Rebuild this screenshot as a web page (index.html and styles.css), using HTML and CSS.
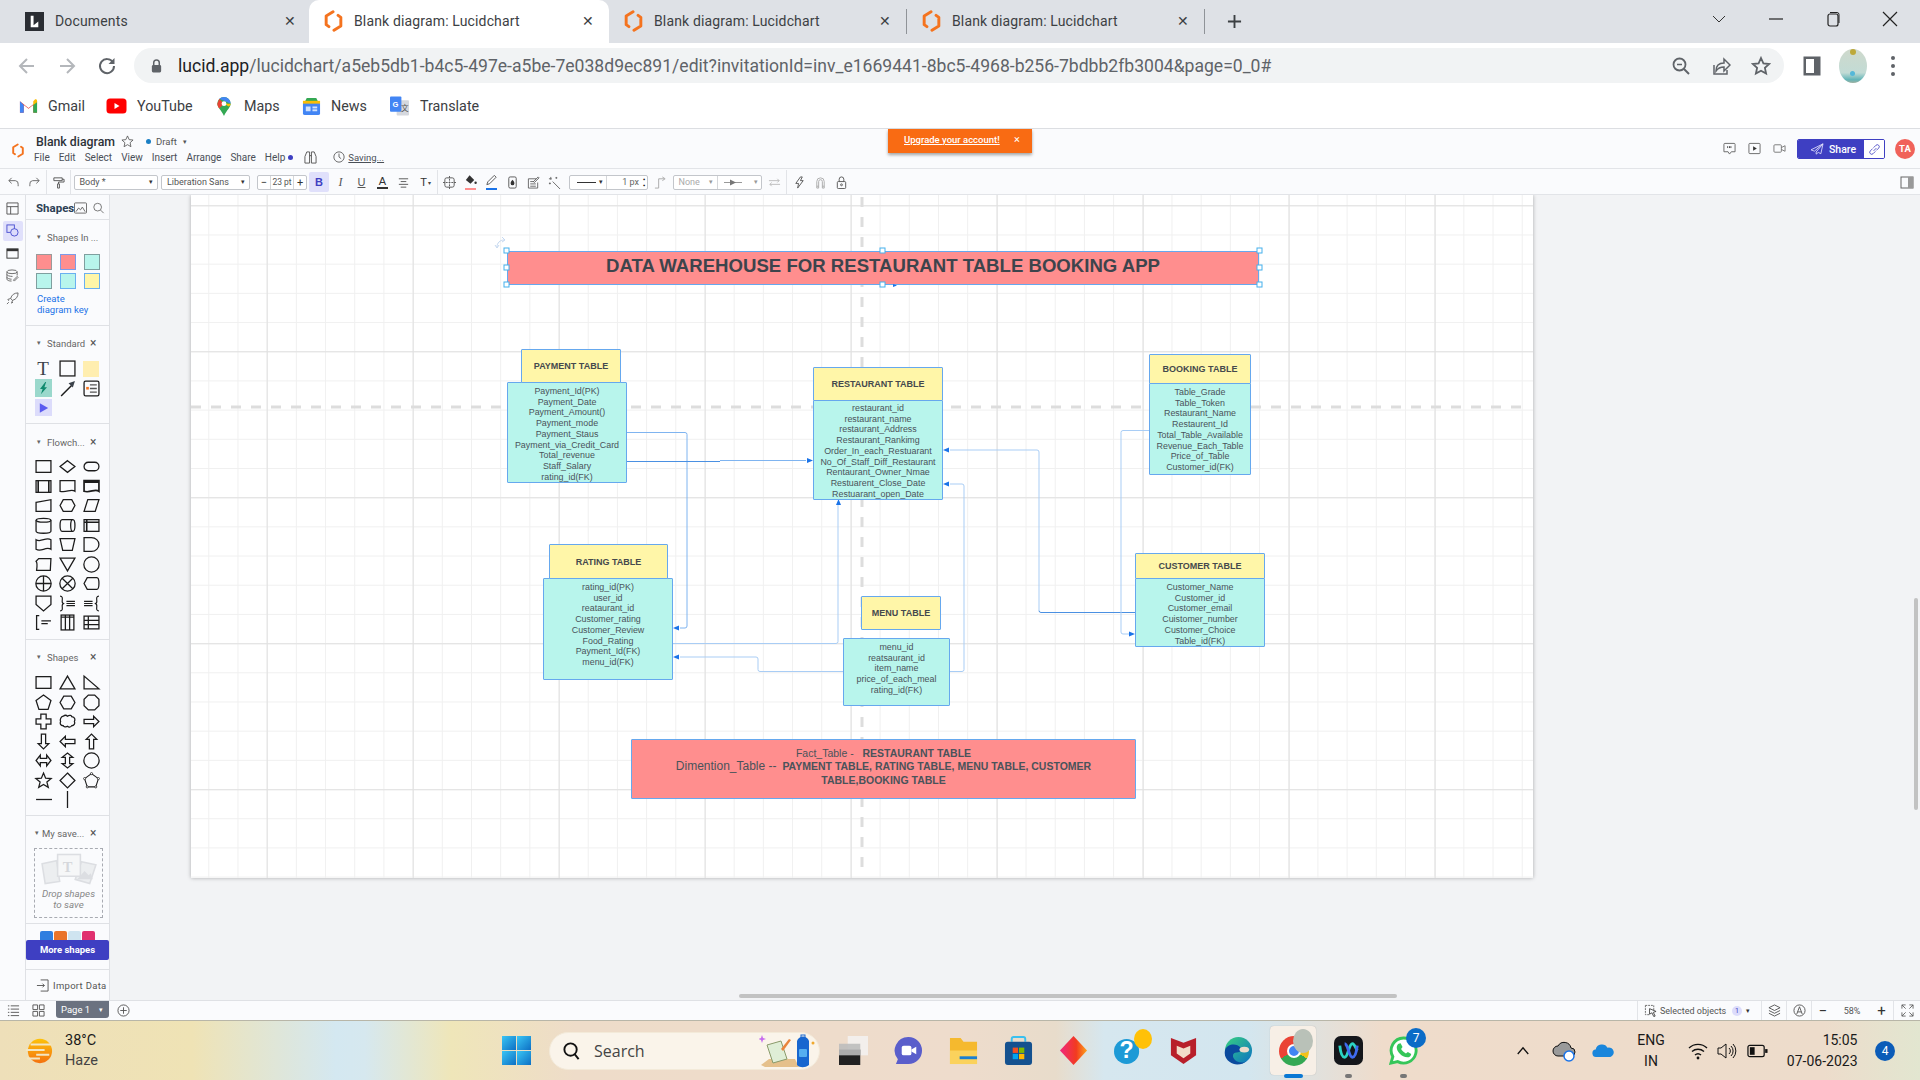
FILE: index.html
```html
<!DOCTYPE html>
<html lang="en">
<head>
<meta charset="utf-8">
<title>Blank diagram: Lucidchart</title>
<link rel="stylesheet" href="styles.css">
</head>
<body>
<svg class="defs" width="0" height="0"><defs>
<symbol id="lucid" viewBox="0 0 20 24"><path d="M9.5 2 2 6.5V16l3 2.2M10.5 22l7.500-4.500V8L15 5.800" fill="none" stroke="#f4731f" stroke-width="3.2" stroke-linecap="round" stroke-linejoin="round"/></symbol>
</defs></svg>

<div class="tabstrip">
  <div class="tab tab-docs">
    <svg class="tab-ico" viewBox="0 0 20 20"><rect width="20" height="20" fill="#2a2d33"/><path d="M6 4h3v10l5-4v6H6z" fill="#fff"/></svg>
    <span class="tab-title">Documents</span><span class="tab-x">✕</span>
  </div>
  <div class="tab tab-active">
    <svg class="tab-ico"><use href="#lucid"/></svg>
    <span class="tab-title">Blank diagram: Lucidchart</span><span class="tab-x">✕</span>
  </div>
  <div class="tab tab-sep">
    <svg class="tab-ico"><use href="#lucid"/></svg>
    <span class="tab-title">Blank diagram: Lucidchart</span><span class="tab-x">✕</span>
  </div>
  <div class="tab tab-sep">
    <svg class="tab-ico"><use href="#lucid"/></svg>
    <span class="tab-title">Blank diagram: Lucidchart</span><span class="tab-x">✕</span>
  </div>
  <svg class="new-tab" viewBox="0 0 16 16"><path d="M8 1v14M1 8h14" stroke="#3c4043" stroke-width="2"/></svg>
  <div class="win-ctrls">
    <svg class="win-ico" viewBox="0 0 16 16"><path d="M2 5l6 6 6-6" fill="none" stroke="#333" stroke-width="1"/></svg>
    <svg class="win-ico" viewBox="0 0 16 16"><path d="M1 8h14" stroke="#222" stroke-width="1.200"/></svg>
    <svg class="win-ico" viewBox="0 0 16 16"><rect x="3" y="3" width="10" height="12" rx="2" fill="none" stroke="#222" stroke-width="1.200"/><path d="M5 1.500h7a2 2 0 0 1 2 2V12" fill="none" stroke="#222"/></svg>
    <svg class="win-ico" viewBox="0 0 16 16"><path d="M1 1l14 14M15 1 1 15" stroke="#222" stroke-width="1.200"/></svg>
  </div>
</div>

<div class="navbar">
  <svg class="nav-ico" viewBox="0 0 20 20"><path d="M17 10H4M10 3l-7 7 7 7" fill="none" stroke="#b4b7bb" stroke-width="2"/></svg>
  <svg class="nav-ico" viewBox="0 0 20 20"><path d="M3 10h13M10 3l7 7-7 7" fill="none" stroke="#b4b7bb" stroke-width="2"/></svg>
  <svg class="nav-ico" viewBox="0 0 20 20"><path d="M16 6.500A7 7 0 1 0 17 10" fill="none" stroke="#5f6368" stroke-width="2"/><path d="M17.500 2v6h-6z" fill="#5f6368"/></svg>
  <div class="omnibox">
    <svg class="lock" viewBox="0 0 14 16"><path d="M4 7V4.500a3 3 0 0 1 6 0V7" fill="none" stroke="#5f6368" stroke-width="1.600"/><rect x="2" y="7" width="10" height="8" rx="1.500" fill="#5f6368"/></svg>
    <span class="url"><b class="url-host">lucid.app</b>/lucidchart/a5eb5db1-b4c5-497e-a5be-7e038d9ec891/edit?invitationId=inv_e1669441-8bc5-4968-b256-7bdbb2fb3004&amp;page=0_0#</span>
    <svg class="omni-ico" viewBox="0 0 20 20"><circle cx="8.500" cy="8.500" r="6" fill="none" stroke="#5f6368" stroke-width="1.800"/><path d="M13 13l5 5" stroke="#5f6368" stroke-width="2"/><path d="M6 8.500h5" stroke="#5f6368" stroke-width="1.500"/></svg>
    <svg class="omni-ico" viewBox="0 0 20 20"><path d="M3 9v9h13v-4" fill="none" stroke="#5f6368" stroke-width="1.500"/><path d="M5 15c0-6 4-8 8-8V3l6 6-6 6v-4c-4 0-6 1-8 4z" fill="none" stroke="#5f6368" stroke-width="1.500"/></svg>
    <svg class="omni-ico" viewBox="0 0 20 20"><path d="M10 2l2.400 5.400 5.800.600-4.300 3.900 1.200 5.700L10 14.700l-5.100 2.900 1.200-5.700L1.800 8l5.800-.600z" fill="none" stroke="#5f6368" stroke-width="1.800"/></svg>
  </div>
  <svg class="side-ico" viewBox="0 0 18 20"><rect x=".5" y=".5" width="17" height="19" fill="#5f6368"/><rect x="3" y="3" width="8" height="14" fill="#fff"/></svg>
  <div class="avatar"><span class="avatar-top"></span><span class="avatar-dot"></span></div>
  <div class="kebab"><i></i><i></i><i></i></div>
</div>

<div class="bookmarks">
  <div class="bm bm-gmail"><svg class="bm-ico" viewBox="0 0 20 16"><path d="M1 15V3l9 7 9-7v12h-4V7l-5 4-5-4v8z" fill="#ea4335"/><path d="M1 15h4V7L1 3z" fill="#4285f4"/><path d="M15 15h4V3l-4 4z" fill="#34a853"/><path d="M15 3v4l4-3V2.500c0-1.500-1.500-2-2.500-1.200z" fill="#fbbc04"/></svg><span>Gmail</span></div>
  <div class="bm bm-yt"><svg class="bm-ico" viewBox="0 0 20 16"><rect width="20" height="15" y=".5" rx="3.500" fill="#ff0000"/><path d="M8 5l5 3-5 3z" fill="#fff"/></svg><span>YouTube</span></div>
  <div class="bm bm-maps"><svg class="bm-ico" viewBox="0 0 16 22"><path d="M8 1a7 7 0 0 1 7 7c0 4-4 6-7 13C5 14 1 12 1 8a7 7 0 0 1 7-7z" fill="#34a853"/><path d="M8 1a7 7 0 0 1 7 7L3 3a7 7 0 0 1 5-2z" fill="#4285f4"/><path d="M3 3 1 8c0 2 1 3.500 2 5L8 8z" fill="#ea4335"/><path d="M15 8l-7 0 5 3c1-1 2-2 2-3z" fill="#fbbc04"/><circle cx="8" cy="8" r="2.500" fill="#fff"/></svg><span>Maps</span></div>
  <div class="bm bm-news"><svg class="bm-ico" viewBox="0 0 20 20"><path d="M3 5 5 1h10l2 4z" fill="#34a853"/><rect x="1" y="5" width="18" height="14" rx="2" fill="#4285f4"/><rect x="1" y="4" width="18" height="3" fill="#fbbc04"/><rect x="4" y="10" width="5" height="5" fill="#cfe1fd"/><rect x="11" y="10" width="5" height="2" fill="#cfe1fd"/><rect x="11" y="13" width="5" height="2" fill="#cfe1fd"/></svg><span>News</span></div>
  <div class="bm bm-tr"><svg class="bm-ico" viewBox="0 0 20 20"><rect x="7" y="4" width="13" height="16" rx="1" fill="#d5d8de"/><rect width="12" height="16" rx="1" fill="#4285f4"/><text class="bm-g" x="2.500" y="11">G</text><text class="bm-z" x="11.500" y="15">文</text></svg><span>Translate</span></div>
</div>

<div class="lucid-head">
  <svg class="lh-logo"><use href="#lucid"/></svg>
  <div class="lh-doc">
    <div class="lh-title-row">
      <span class="lh-title">Blank diagram</span>
      <svg class="lh-star" viewBox="0 0 14 14"><path d="M7 1l1.800 4 4.200.4-3.200 2.900.9 4.300L7 10.400l-3.700 2.200.9-4.300L1 5.400 5.200 5z" fill="none" stroke="#555" stroke-width=".9"/></svg>
      <span class="lh-dot"></span><span class="lh-draft">Draft</span><span class="lh-caret">▾</span>
    </div>
    <div class="lh-menu">
      <span>File</span><span>Edit</span><span>Select</span><span>View</span><span>Insert</span><span>Arrange</span><span>Share</span><span class="menu-help">Help</span><i class="menu-dot"></i>
      <svg class="menu-bino" viewBox="0 0 14 14"><path d="M3 1h3v12H1V6zM8 1h3l2 5v7H8zM6 5h2" fill="none" stroke="#555" stroke-width="1"/></svg>
      <svg class="menu-clock" viewBox="0 0 14 14"><circle cx="7" cy="7" r="6" fill="none" stroke="#555"/><path d="M7 3v4l2.500 2" fill="none" stroke="#555"/></svg>
      <span class="menu-saving">Saving...</span>
    </div>
  </div>
  <div class="upgrade"><span class="upgrade-link">Upgrade your account!</span><span class="upgrade-x">×</span></div>
  <div class="lh-right">
    <svg class="lh-ico" viewBox="0 0 14 14"><path d="M2 1.500h10a1 1 0 0 1 1 1v8h-4L7 13l-1.500-2.500H1v-8a1 1 0 0 1 1-1z" fill="none" stroke="#666"/><path d="M5 4.500v2M7 4.500v2M8.500 4.500v2" stroke="#444"/></svg>
    <svg class="lh-ico" viewBox="0 0 14 14"><rect x="1" y="1.500" width="12" height="11" rx="1" fill="none" stroke="#666"/><path d="M5.500 4.500l4 2.500-4 2.500z" fill="#333"/></svg>
    <svg class="lh-ico" viewBox="0 0 14 14"><rect x="1" y="3" width="8" height="8" rx="1" fill="none" stroke="#777"/><path d="M9 6l4-2v6L9 8" fill="none" stroke="#777"/></svg>
    <div class="share-btn">
      <div class="share-main"><svg class="share-plane" viewBox="0 0 16 14"><path d="M15 1 1 8l4 1.500L15 1 7 10.500V13l2.500-2 3 1.500z" fill="none" stroke="#dfe0fb" stroke-width="1"/></svg><span>Share</span></div>
      <div class="share-link"><svg class="share-chain" viewBox="0 0 14 14"><path d="M6 8.500 9 5.500M5 6 2.500 8.500a2.100 2.100 0 0 0 3 3L8 9M6 5l2.500-2.500a2.100 2.100 0 0 1 3 3L9 8" fill="none" stroke="#3e3fc2" stroke-width=".9"/></svg></div>
    </div>
    <div class="user-badge">TA</div>
  </div>
</div>

<div class="lucid-tools">
  <div class="slot"><svg class="tb" viewBox="0 0 14 14"><path d="M2 5h7a3.500 3.500 0 0 1 3 4v2M5 2 2 5l3 3" fill="none" stroke="#666"/></svg></div>
  <div class="slot"><svg class="tb" viewBox="0 0 14 14"><path d="M12 5H5a3.500 3.500 0 0 0-3 4v2M9 2l3 3-3 3" fill="none" stroke="#666"/></svg></div>
  <i class="tb-sep tb-sep-a"></i>
  <div class="slot"><svg class="tb" viewBox="0 0 14 14"><path d="M2 2h9v3H2zM11 3.500h2v3H7v2M6 8.500h2v4.500H6z" fill="none" stroke="#555"/></svg></div>
  <i class="tb-sep tb-sep-b"></i>
  <div class="sel sel-body"><span>Body *</span><em>▾</em></div>
  <div class="sel sel-font"><span>Liberation Sans</span><em>▾</em></div>
  <div class="size-box"><span class="sb-btn">−</span><span class="sb-val">23 pt</span><span class="sb-btn">+</span></div>
  <div class="bold-btn">B</div>
  <div class="slot"><span class="tb-i">I</span></div>
  <div class="slot"><span class="tb-u">U</span></div>
  <div class="slot"><span class="tb-a">A</span></div>
  <div class="slot"><svg class="tb" viewBox="0 0 14 14"><path d="M2 3h10M4 6h6M2 9h10M4 12h6" stroke="#555"/></svg></div>
  <div class="slot slot-t"><span class="tb-t">T</span><em class="tb-caret">▾</em></div>
  <i class="tb-sep tb-sep-c"></i>
  <div class="slot"><svg class="tb" viewBox="0 0 14 14"><rect x="2" y="2" width="10" height="10" rx="2" fill="none" stroke="#555"/><path d="M7 0v14M0 7h14" stroke="#555" stroke-dasharray="2 1"/></svg></div>
  <div class="slot slot-col"><svg class="tb" viewBox="0 0 14 12"><path d="M6 1l5 5-4 4-5-4z" fill="#333"/><circle cx="12.500" cy="9" r="1.300" fill="#333"/></svg><i class="swatch-fill"></i></div>
  <div class="slot slot-col"><svg class="tb" viewBox="0 0 14 12"><path d="M2 11l1-3 7-7 2 2-7 7z" fill="none" stroke="#555"/></svg><i class="swatch-line"></i></div>
  <div class="slot"><svg class="tb" viewBox="0 0 14 14"><rect x="3" y="1" width="8" height="12" rx="1.500" fill="none" stroke="#555"/><path d="M7 4c2 2 2 3 2 4a2 2 0 0 1-4 0c0-1 0-2 2-4z" fill="#333"/></svg></div>
  <div class="slot"><svg class="tb" viewBox="0 0 14 14"><path d="M10 3H1.500v10h10V7M3.500 6h4M3.500 8.500h6M3.500 11h6M7 6l5-5 1 1-5 5z" fill="none" stroke="#555" stroke-width=".9"/></svg></div>
  <div class="slot"><svg class="tb" viewBox="0 0 14 14"><path d="M5 6l8 8M3 1v3M1 3h3M9 1v2M8 2h2M1 8h2M2 7v2" fill="none" stroke="#666"/></svg></div>
  <div class="line-sel"><div class="ls-left"><i class="ls-line"></i><em>▾</em></div><div class="ls-right"><span>1 px</span><em class="ls-dots">⁚</em></div></div>
  <div class="slot"><svg class="tb" viewBox="0 0 14 14"><path d="M1 13h4V3h6M9 1l3 2-3 2" fill="none" stroke="#aaa"/></svg></div>
  <div class="end-sel"><div class="es-left"><span>None</span><em>▾</em></div><div class="es-right"><svg class="es-arrow" viewBox="0 0 24 8"><path d="M0 4h24" stroke="#777"/><path d="M8 0l8 4-8 4z" fill="#777"/></svg><em>▾</em></div></div>
  <div class="slot"><svg class="tb" viewBox="0 0 14 14"><path d="M1 5h11M10 3l2 2-2 2M13 9H2M4 7 2 9l2 2" fill="none" stroke="#bbb"/></svg></div>
  <i class="tb-sep tb-sep-d"></i>
  <div class="slot"><svg class="tb" viewBox="0 0 14 14"><path d="M8 1 3 8h3l-1 5 6-8H8l2-4z" fill="none" stroke="#555"/></svg></div>
  <div class="slot"><svg class="tb" viewBox="0 0 14 14"><path d="M3 13V6a4 4 0 0 1 8 0v7h-2V6a2 2 0 0 0-4 0v7zM3 11h2M9 11h2" fill="none" stroke="#aaa"/></svg></div>
  <div class="slot"><svg class="tb" viewBox="0 0 14 14"><rect x="2.500" y="6" width="9" height="7.500" rx="1" fill="none" stroke="#555"/><path d="M4.500 6V3.500a2.500 2.500 0 0 1 5 0V6" fill="none" stroke="#555"/><circle cx="7" cy="9.500" r="1" fill="none" stroke="#555"/></svg></div>
  <svg class="tb-panel" viewBox="0 0 14 14"><rect x="1" y="2" width="12" height="11" fill="none" stroke="#666"/><rect x="8" y="2" width="5" height="11" fill="#999"/></svg>
</div>

<div class="workspace">
  <nav class="rail">
    <div class="rail-item"><svg class="rail-ico" viewBox="0 0 14 14"><path d="M1 1h12v12H1zM1 5h12M5 5v8" fill="none" stroke="#555"/></svg></div>
    <div class="rail-item rail-on"><svg class="rail-ico" viewBox="0 0 14 14"><rect x="1" y="1" width="8" height="8" fill="none" stroke="#4a4fd0"/><circle cx="9" cy="9" r="4" fill="#dcdcfb" stroke="#4a4fd0"/></svg></div>
    <div class="rail-item"><svg class="rail-ico" viewBox="0 0 14 14"><rect x="1" y="2" width="12" height="10" fill="none" stroke="#333"/><rect x="1" y="2" width="12" height="2.500" fill="#333"/></svg></div>
    <div class="rail-item"><svg class="rail-ico" viewBox="0 0 14 14"><ellipse cx="6.500" cy="3" rx="5.500" ry="2" fill="none" stroke="#666"/><path d="M1 3v8c0 1 2 2 5 2M12 3v4M1 6c0 1 3 2 6 2M1 9c0 1 3 2 5 2M9 13l4-4-1-1-4 4z" fill="none" stroke="#666"/></svg></div>
    <div class="rail-item"><svg class="rail-ico" viewBox="0 0 14 14"><path d="M13 1c-4 0-7 2-8 6l2 2c4-1 6-4 6-8zM5 7 2 8l1 1.500M7 9l-1 3 1.500-1M3 11l-2 2" fill="none" stroke="#666"/></svg></div>
  </nav>

  <aside class="panel">
    <div class="panel-top"><span class="panel-title">Shapes</span>
      <svg class="pt-ico" viewBox="0 0 14 12"><rect x=".5" y=".5" width="13" height="11" rx="1" fill="none" stroke="#666"/><path d="M2 10l3-4 2 2 2-3 3 5" fill="none" stroke="#666"/></svg>
      <svg class="pt-ico" viewBox="0 0 14 14"><circle cx="6" cy="6" r="4.500" fill="none" stroke="#666"/><path d="M9.500 9.500 13 13" stroke="#666"/></svg>
    </div>
    <section class="sec sec-in">
      <div class="sec-head"><i>▾</i><span>Shapes In ...</span></div>
      <div class="swatches">
        <i class="sw sw-r1"></i><i class="sw sw-r2"></i><i class="sw sw-t1"></i>
        <i class="sw sw-t2"></i><i class="sw sw-t3"></i><i class="sw sw-y"></i>
      </div>
      <div class="key-link">Create<br>diagram key</div>
    </section>
    <section class="sec sec-std">
      <div class="sec-head"><i>▾</i><span>Standard</span><b>×</b></div>
      <div class="sh-grid">
        <span class="std-t">T</span>
        <svg class="sh" viewBox="0 0 16 16"><rect x="1" y="1" width="14" height="14"/></svg>
        <i class="std-note"></i>
        <span class="std-bolt"><svg class="sh-in" viewBox="0 0 14 16"><path d="M9 1 3 9h3l-2 6 7-8H8l2-6z" fill="#0f8a6e"/></svg></span>
        <svg class="sh" viewBox="0 0 16 16"><path d="M2 15 13 4" stroke-width="1.400"/><path d="M15 1l-6 2 4 4z" class="sh-fill"/></svg>
        <svg class="sh" viewBox="0 0 16 16"><rect x="1" y="1" width="14" height="14" rx="1.500"/><path d="M6.500 4.500H13M6.500 8H13M6.500 11.500H13" stroke="#555"/><rect x="3" y="6.500" width="2.500" height="2.500" fill="#f4731f" stroke="none"/></svg>
        <span class="std-play"><svg class="sh-in" viewBox="0 0 14 14"><path d="M3 2l9 5-9 5z" fill="#5b5bf0"/></svg></span>
      </div>
    </section>
    <section class="sec sec-flow">
      <div class="sec-head"><i>▾</i><span>Flowch...</span><b>×</b></div>
      <div class="sh-grid">
        <svg class="sh" viewBox="0 0 16 16"><rect x="1" y="2.500" width="14" height="11"/></svg>
        <svg class="sh" viewBox="0 0 16 16"><path d="M8 2.500l7 5.500-7 5.500L1 8z"/></svg>
        <svg class="sh" viewBox="0 0 16 16"><rect x="1" y="4" width="14" height="8" rx="4"/></svg>
        <svg class="sh" viewBox="0 0 16 16"><rect x="1" y="2.500" width="14" height="11"/><path d="M3 2.500v11M13 2.500v11" stroke-width="1.500"/></svg>
        <svg class="sh" viewBox="0 0 16 16"><path d="M1 2.500h14v10c-4-3-8 2-14 0z"/></svg>
        <svg class="sh" viewBox="0 0 16 16"><path d="M1 2.500h14v10c-4-3-8 2-14 0zM1 4h14" stroke-width="1.600"/></svg>
        <svg class="sh" viewBox="0 0 16 16"><path d="M1 5l14-2.500v11H1z"/></svg>
        <svg class="sh" viewBox="0 0 16 16"><path d="M4 2.500h8L15 8l-3 5.500H4L1 8z"/></svg>
        <svg class="sh" viewBox="0 0 16 16"><path d="M4.500 2.500H15L11.500 13.500H1z"/></svg>
        <svg class="sh" viewBox="0 0 16 16"><ellipse cx="8" cy="3" rx="7" ry="1.800"/><path d="M1 3v10.500c0 1 3 1.800 7 1.800s7-.8 7-1.800V3"/></svg>
        <svg class="sh" viewBox="0 0 16 16"><path d="M3 2.500h10c1.500 0 2 2.500 2 5.500s-.5 5.500-2 5.500H3C1.500 13.500 1 11 1 8s.5-5.500 2-5.500zM13 2.500c-1.500 0-2 2.500-2 5.500s.5 5.500 2 5.500"/></svg>
        <svg class="sh" viewBox="0 0 16 16"><rect x="1" y="2.500" width="14" height="11"/><path d="M1 5h14M3.500 2.500v11" stroke-width="1.500"/></svg>
        <svg class="sh" viewBox="0 0 16 16"><path d="M1 3.500c5 3 9-3 14 0v9c-5-3-9 3-14 0z"/></svg>
        <svg class="sh" viewBox="0 0 16 16"><path d="M1 2.500h14l-2.500 11h-9z"/></svg>
        <svg class="sh" viewBox="0 0 16 16"><path d="M1 1.500h7a7 6.500 0 0 1 0 13H1z"/></svg>
        <svg class="sh" viewBox="0 0 16 16"><path d="M3.500 2.500H15l-.6 11H1.500C2 10 2 6 1 5z"/></svg>
        <svg class="sh" viewBox="0 0 16 16"><path d="M1 2h14L8 14z"/></svg>
        <svg class="sh" viewBox="0 0 16 16"><circle cx="8" cy="8" r="7.200"/></svg>
        <svg class="sh" viewBox="0 0 16 16"><circle cx="8" cy="8" r="7.200"/><path d="M8 1v14M1 8h14"/></svg>
        <svg class="sh" viewBox="0 0 16 16"><circle cx="8" cy="8" r="7.200"/><path d="M3 3l10 10M13 3 3 13"/></svg>
        <svg class="sh" viewBox="0 0 16 16"><path d="M4 2.500h9c1.500 0 2 3 2 5.500s-.5 5.500-2 5.500H4L1 8z"/></svg>
        <svg class="sh" viewBox="0 0 16 16"><path d="M1 1h14v8l-7 6-7-6z"/></svg>
        <svg class="sh" viewBox="0 0 16 16"><path d="M1 1c3 0 2 3 2 5s1 2 2 2c-1 0-2 0-2 2s1 5-2 5M7 6h8M7 8h8M7 10h8" stroke-width="1.100"/></svg>
        <svg class="sh" viewBox="0 0 16 16"><path d="M15 1c-3 0-2 3-2 5s-1 2-2 2c1 0 2 0 2 2s-1 5 2 5M1 6h8M1 8h8M1 10h8" stroke-width="1.100"/></svg>
        <svg class="sh" viewBox="0 0 16 16"><path d="M4 1.500H1.500v13H4M6 6.500h9M6 9h6"/></svg>
        <svg class="sh" viewBox="0 0 16 16"><rect x="2" y="1" width="12" height="14"/><path d="M2 3h12M6 1v14M10 1v14"/></svg>
        <svg class="sh" viewBox="0 0 16 16"><rect x="1" y="2" width="14" height="12"/><path d="M1 6h14M1 10h14M5 2v12"/></svg>
      </div>
    </section>
    <section class="sec sec-shp">
      <div class="sec-head"><i>▾</i><span>Shapes</span><b>×</b></div>
      <div class="sh-grid">
        <svg class="sh" viewBox="0 0 16 16"><rect x="1" y="2.500" width="14" height="11"/></svg>
        <svg class="sh" viewBox="0 0 16 16"><path d="M8 2l7 12H1z"/></svg>
        <svg class="sh" viewBox="0 0 16 16"><path d="M1 2v12h14z"/></svg>
        <svg class="sh" viewBox="0 0 16 16"><path d="M8 1l7 5-2.700 8.500H3.700L1 6z"/></svg>
        <svg class="sh" viewBox="0 0 16 16"><path d="M4.500 2h7L15 8l-3.500 6h-7L1 8z"/></svg>
        <svg class="sh" viewBox="0 0 16 16"><path d="M5 1h6l4 4v6l-4 4H5l-4-4V5z"/></svg>
        <svg class="sh" viewBox="0 0 16 16"><path d="M5.500 1h5v4.500H15v5h-4.500V15h-5v-4.500H1v-5h4.500z"/></svg>
        <svg class="sh" viewBox="0 0 16 16"><path d="M4 3c2-1.500 3-1 4 0 2-1.500 4-.5 4 .5 3 .5 3.500 2.500 2.500 4.500 1 2-.5 4-2.500 4-1 1.500-3 1.500-4 .5-1.500 1-3.500.5-4-.5C1.500 12 .5 10 1.500 8 .5 6 2 3.500 4 3z"/></svg>
        <svg class="sh" viewBox="0 0 16 16"><path d="M1 6h9V3l5 5-5 5v-3H1z"/></svg>
        <svg class="sh" viewBox="0 0 16 16"><path d="M6 1h4v9h3l-5 5-5-5h3z"/></svg>
        <svg class="sh" viewBox="0 0 16 16"><path d="M15 6H6V3L1 8l5 5v-3h9z"/></svg>
        <svg class="sh" viewBox="0 0 16 16"><path d="M6 15h4V6h3L8 1 3 6h3z"/></svg>
        <svg class="sh" viewBox="0 0 16 16"><path d="M5 6h6V3l4 5-4 5v-3H5v3L1 8l4-5z"/></svg>
        <svg class="sh" viewBox="0 0 16 16"><path d="M6 5v6H3l5 4 5-4h-3V5h3L8 1 3 5z"/></svg>
        <svg class="sh" viewBox="0 0 16 16"><circle cx="8" cy="8" r="7.200"/></svg>
        <svg class="sh" viewBox="0 0 16 16"><path d="M8 1l2 4.800 5.200.4-4 3.300 1.300 5L8 11.800 3.500 14.500l1.300-5-4-3.300L6 5.800z"/></svg>
        <svg class="sh" viewBox="0 0 16 16"><path d="M8 1l7 7-7 7-7-7z"/></svg>
        <svg class="sh" viewBox="0 0 16 16"><path d="M8 1.500l6.500 4.700L12 14H4L1.500 6.200z" stroke-width="1"/><circle cx="8" cy="1.500" r="1" class="sh-white"/><circle cx="14.500" cy="6.200" r="1" class="sh-white"/><circle cx="12" cy="14" r="1" class="sh-white"/><circle cx="4" cy="14" r="1" class="sh-white"/><circle cx="1.500" cy="6.200" r="1" class="sh-white"/></svg>
        <svg class="sh" viewBox="0 0 16 16"><path d="M1 8h15"/></svg>
        <svg class="sh" viewBox="0 0 16 16"><path d="M8 0v16"/></svg>
      </div>
    </section>
    <section class="sec sec-saved">
      <div class="sec-head sec-head-saved"><i>▾</i><span>My save...</span><b>×</b></div>
      <div class="drop-box">
        <svg class="drop-art" viewBox="0 0 56 30"><path d="M2 10l14-3 3 20-14 2zM40 8l14 3-6 18-14-4z" fill="#eceef0" stroke="#dcdee2" stroke-width="1.500"/><rect x="17" y="1" width="22" height="21" fill="#f6f7f8" stroke="#dcdee2" stroke-width="1.500"/><text class="drop-t" x="22" y="18">T</text><path d="M36 25l7-8 4 4 2-2 2 6z" fill="#dcdee2"/></svg>
        <span class="drop-text">Drop shapes<br>to save</span>
      </div>
    </section>
    <section class="sec sec-more">
      <div class="more-art"><i class="ma ma-b"></i><i class="ma ma-o"></i><i class="ma ma-g"></i><i class="ma ma-p"></i></div>
      <div class="more-btn">More shapes</div>
    </section>
    <section class="sec sec-import">
      <svg class="imp-ico" viewBox="0 0 14 14"><path d="M5 1h8v12H5M1 7h8M7 5l2 2-2 2" fill="none" stroke="#555"/></svg>
      <span>Import Data</span>
    </section>
  </aside>

  <main class="stage">
    <div class="page">
      <svg class="wires" viewBox="191 196 1342 683">
        <path class="dash" d="M191 408H1526"/>
        <path class="dash" d="M862 198V870"/>
        <path class="wire" d="M626 433.500H685a2 2 0 0 1 2 2V627a2 2 0 0 1-2 2H680"/>
        <path class="wire-strong" d="M626 462.500H720"/>
        <path class="wire" d="M720 461.500H806"/>
        <path class="wire-light" d="M673 644.500H836a2 2 0 0 0 2-2V506"/>
        <path class="wire-light" d="M843 672.500H760a2 2 0 0 1-2-2V660a2 2 0 0 0-2-2H680"/>
        <path class="wire-light" d="M950 672.500H962a2 2 0 0 0 2-2V487a2 2 0 0 0-2-2H950"/>
        <path class="wire-strong" d="M1135 613.500H1041a2 2 0 0 1-2-2"/>
        <path class="wire-light" d="M1039 611.500V453a2 2 0 0 0-2-2H950"/>
        <path class="wire-light" d="M1149 431.500H1123a2 2 0 0 0-2 2V633a2 2 0 0 0 2 2H1129"/>
        <path class="arrow" d="M673 629l6-2.500v5zM813 461.500l-6-2.500v5zM838.500 500l-2.500 6h5zM673 658l6-2.500v5zM943 485l6-2.500v5zM943 451l6-2.500v5zM1135 635l-6-2.500v5z"/>
      </svg>

      <div class="node red n-title">DATA WAREHOUSE FOR RESTAURANT TABLE BOOKING APP</div>

      <div class="node teal n-pay-b">Payment_Id(PK)<br>Payment_Date<br>Payment_Amount()<br>Payment_mode<br>Payment_Staus<br>Payment_via_Credit_Card<br>Total_revenue<br>Staff_Salary<br>rating_id(FK)</div>
      <div class="node yellow n-pay-h">PAYMENT TABLE</div>

      <div class="node teal n-res-b">restaurant_id<br>restaurant_name<br>restaurant_Address<br>Restaurant_Rankimg<br>Order_In_each_Restuarant<br>No_Of_Staff_Diff_Restaurant<br>Rentaurant_Owner_Nmae<br>Restuarent_Close_Date<br>Restuarant_open_Date</div>
      <div class="node yellow n-res-h">RESTAURANT TABLE</div>

      <div class="node teal n-boo-b">Table_Grade<br>Table_Token<br>Restaurant_Name<br>Restaurent_Id<br>Total_Table_Available<br>Revenue_Each_Table<br>Price_of_Table<br>Customer_id(FK)</div>
      <div class="node yellow n-boo-h">BOOKING TABLE</div>

      <div class="node teal n-cus-b">Customer_Name<br>Customer_id<br>Customer_email<br>Cuistomer_number<br>Customer_Choice<br>Table_id(FK)</div>
      <div class="node yellow n-cus-h">CUSTOMER TABLE</div>

      <div class="node teal n-rat-b">rating_id(PK)<br>user_id<br>reataurant_id<br>Customer_rating<br>Customer_Review<br>Food_Rating<br>Payment_Id(FK)<br>menu_id(FK)</div>
      <div class="node yellow n-rat-h">RATING TABLE</div>

      <div class="node teal n-men-b">menu_id<br>reatsaurant_id<br>item_name<br>price_of_each_meal<br>rating_id(FK)</div>
      <div class="node yellow n-men-h">MENU TABLE</div>

      <div class="node red n-foot">
        <div class="foot-l1">Fact_Table -&nbsp;&nbsp; <b>RESTAURANT TABLE</b></div>
        <div class="foot-l2"><span class="foot-big">Dimention_Table --</span>&nbsp; <b>PAYMENT TABLE, RATING TABLE, MENU TABLE, CUSTOMER<br>TABLE,BOOKING TABLE</b></div>
      </div>

      <svg class="handles" viewBox="191 196 1342 683">
        <path class="rot" d="M497 248c0-4 3-7 7-7M502 238l3 3-3 2M495 246l2 3 2-3"/>
        <rect class="hd" x="504" y="249" width="5" height="5"/><rect class="hd" x="504" y="266" width="5" height="5"/><rect class="hd" x="504" y="283" width="5" height="5"/>
        <rect class="hd" x="880" y="249" width="5" height="5"/><rect class="hd" x="880" y="283" width="5" height="5"/>
        <rect class="hd" x="1257" y="249" width="5" height="5"/><rect class="hd" x="1257" y="266" width="5" height="5"/><rect class="hd" x="1257" y="283" width="5" height="5"/>
        <path class="arrow" d="M893 285l4 1.500-4 1.500z"/>
      </svg>
    </div>
    <div class="hscroll"></div>
    <div class="vscroll"></div>
  </main>
</div>

<div class="pagebar">
  <svg class="pb-ico pb-list" viewBox="0 0 14 14"><path d="M4 2h9M4 5.500h9M4 9h9M4 12.500h9M1 2h1.500M1 5.500h1.500M1 9h1.500M1 12.500h1.500" stroke="#555"/></svg>
  <svg class="pb-ico pb-grid" viewBox="0 0 14 14"><path d="M1 1h5v5H1zM8 1h5v5H8zM1 8h5v5H1zM8 8h5v5H8z" fill="none" stroke="#555"/></svg>
  <div class="page-pill"><span>Page 1</span><em>▾</em></div>
  <svg class="pb-ico pb-add" viewBox="0 0 14 14"><circle cx="7" cy="7" r="6" fill="none" stroke="#555"/><path d="M7 3.500v7M3.500 7h7" stroke="#555"/></svg>
  <div class="status">
    <div class="st-sel"><svg class="pb-ico" viewBox="0 0 14 14"><path d="M1.500 1.500h9v5M1.500 1.500v10h5" fill="none" stroke="#666" stroke-dasharray="2 1"/><path d="M6 5l7 3-3 1 2 4-1.500.5-2-4L6 11z" fill="none" stroke="#444"/></svg><span>Selected objects</span><i class="st-badge">1</i><em>▾</em></div>
    <div class="st-slot st-bord"><svg class="pb-ico" viewBox="0 0 14 14"><path d="M7 1l6 3-6 3-6-3zM1 7l6 3 6-3M1 10l6 3 6-3" fill="none" stroke="#555"/></svg></div>
    <div class="st-slot st-bord"><svg class="pb-ico" viewBox="0 0 14 14"><circle cx="7" cy="7" r="6" fill="none" stroke="#555"/><path d="M4 11 7 3l3 8M5 8.500h4" fill="none" stroke="#555"/></svg></div>
    <div class="st-slot st-pm">−</div>
    <div class="st-zoom">58%</div>
    <div class="st-slot st-pm">+</div>
    <div class="st-slot st-full"><svg class="pb-ico" viewBox="0 0 14 14"><path d="M1 5V1h4M13 5V1H9M1 9v4h4M13 9v4H9M1 1l4 4M13 1 9 5M1 13l4-4M13 13 9 9" fill="none" stroke="#555" stroke-width=".9"/></svg></div>
  </div>
</div>

<footer class="taskbar">
  <div class="weather">
    <svg class="wx-ico" viewBox="0 0 30 30"><defs><linearGradient id="sun" x1="0" y1="0" x2="0" y2="1"><stop offset="0" stop-color="#fdc20a"/><stop offset="1" stop-color="#f4720f"/></linearGradient></defs><circle cx="16" cy="15" r="13" fill="url(#sun)"/><path d="M6 8h22M1 14h20M12 19h14M2 23h14" stroke="#f3e6c2" stroke-width="2.200"/></svg>
    <div class="wx-text"><span>38°C</span><span class="wx-sub">Haze</span></div>
  </div>
  <div class="tk"><svg class="win-logo" viewBox="0 0 30 30"><defs><linearGradient id="win" x1="0" y1="0" x2="1" y2="1"><stop offset="0" stop-color="#3ac6f5"/><stop offset="1" stop-color="#0d6fc4"/></linearGradient></defs><rect width="14.500" height="14.500" fill="url(#win)"/><rect x="15.500" width="14.500" height="14.500" fill="url(#win)"/><rect y="15.500" width="14.500" height="14.500" fill="url(#win)"/><rect x="15.500" y="15.500" width="14.500" height="14.500" fill="url(#win)"/></svg></div>
  <div class="search">
    <svg class="search-mag" viewBox="0 0 20 20"><circle cx="9" cy="9" r="6.500" fill="none" stroke="#111" stroke-width="2"/><path d="M13.500 14l4 5" stroke="#111" stroke-width="2"/></svg>
    <span class="search-text">Search</span>
    <svg class="search-art" viewBox="0 0 56 36"><path d="M2 32l8-6h26l4 8H6z" fill="#e5c08b"/><path d="M8 12l14-4 6 18-14 4z" fill="#dfeed6" stroke="#8a9a6a"/><path d="M22 16l8-10 2 1-8 11z" fill="#e9843b"/><path d="M3 2l1 3 3 1-3 1-1 3-1-3-3-1 3-1z" fill="#c76bef"/><path d="M38 8c2-6 10-6 12 0v24c-4 3-9 3-12 0z" fill="#1766cf"/><rect x="40" y="16" width="8" height="8" rx="1" fill="#55aef0"/><rect x="42" y="2" width="4" height="4" fill="none" stroke="#1766cf"/><circle cx="54" cy="10" r="1.500" fill="#f0a92e"/></svg>
  </div>
  <div class="tk tk-first"><svg class="tk-ico" viewBox="0 0 30 30"><rect x="9" width="21" height="20" fill="#f4f4f4" opacity=".8"/><rect y="14" width="22" height="16" fill="#222"/><rect y="8" width="22" height="12" fill="#bdbdbd" opacity=".9"/></svg></div>
  <div class="tk"><svg class="tk-ico" viewBox="0 0 30 30"><path d="M15 1a14 14 0 0 1 14 14v0a14 14 0 0 1-14 14H2l2-5A14 14 0 0 1 15 1z" fill="#5a5ecb"/><rect x="8" y="10" width="10" height="10" rx="2" fill="#fff"/><path d="M18 14l5-3v8l-5-3z" fill="#fff"/></svg></div>
  <div class="tk"><svg class="tk-ico" viewBox="0 0 30 30"><path d="M1 2h11l3 4h14v23H1z" fill="#f5b92e"/><rect x="1" y="15" width="28" height="14" fill="#fbd25c"/><rect x="11" y="21" width="18" height="3" fill="#1a7fd1"/></svg></div>
  <div class="tk"><svg class="tk-ico" viewBox="0 0 30 30"><path d="M8 6V3a2 2 0 0 1 2-2h10a2 2 0 0 1 2 2v3" fill="none" stroke="#3ac0ef" stroke-width="2"/><rect x="1" y="6" width="28" height="24" rx="3" fill="#14518f"/><rect x="9" y="12" width="5.500" height="5.500" fill="#f25022"/><rect x="15.500" y="12" width="5.500" height="5.500" fill="#7fba00"/><rect x="9" y="18.500" width="5.500" height="5.500" fill="#00a4ef"/><rect x="15.500" y="18.500" width="5.500" height="5.500" fill="#ffb900"/></svg></div>
  <div class="tk"><svg class="tk-ico" viewBox="0 0 30 30"><defs><linearGradient id="dia" x1="0" y1="0" x2="1" y2="0"><stop offset="0" stop-color="#f0267d"/><stop offset=".6" stop-color="#f23b20"/><stop offset="1" stop-color="#fda31b"/></linearGradient></defs><path d="M15 0l14 15-14 15L1 15z" fill="url(#dia)"/></svg></div>
  <div class="tk tk-help"><svg class="tk-ico" viewBox="0 0 30 30"><circle cx="13" cy="16" r="13" fill="#1d9ad6"/><text class="help-q" x="13" y="23">?</text></svg><i class="help-dot"></i></div>
  <div class="tk"><svg class="tk-ico" viewBox="0 0 30 30"><path d="M2 2l13 5 13-5v18l-13 9-13-9z" fill="#b81f2a"/><path d="M8 10l7 3 7-3v8l-7 5-7-5z" fill="#f2dcc9"/></svg></div>
  <div class="tk"><svg class="tk-ico" viewBox="0 0 30 30"><defs><linearGradient id="edge" x1="0" y1="0" x2="1" y2="1"><stop offset="0" stop-color="#38d27f"/><stop offset="1" stop-color="#0b6fc5"/></linearGradient></defs><circle cx="15" cy="15" r="14" fill="url(#edge)"/><path d="M1 15c2-7 12-8 16-3 2 3-1 5-4 5-5 0-5 6 0 9 4 2 8 2 11-1-4 5-13 6-18 2-4-3-6-7-5-12z" fill="#0a4a9e"/><ellipse cx="21" cy="14" rx="5" ry="3" fill="#eadbcb"/></svg></div>
  <div class="tk tk-chrome">
    <div class="chrome-ball"><i></i></div>
    <div class="chrome-user"></div>
    <i class="tk-active"></i>
  </div>
  <div class="tk"><svg class="tk-ico" viewBox="0 0 30 30"><rect width="30" height="30" rx="7" fill="#14161b"/><path d="M6 10c1 10 3 12 5 12s3-4 4-7 2-7 4-7 3 3 5 7" fill="none" stroke="#2bd4c4" stroke-width="3"/><path d="M24 10c-1 10-3 12-5 12s-3-4-4-7-2-7-4-7" fill="none" stroke="#3f6bf0" stroke-width="3"/></svg><i class="tk-run"></i></div>
  <div class="tk tk-wa"><svg class="tk-ico" viewBox="0 0 30 30"><path d="M15 2a13 13 0 1 1-6 24.500L2 28l2-6.500A13 13 0 0 1 15 2z" fill="#fff" stroke="#35c659" stroke-width="3"/><path d="M10 8l2-.5 2 4-1.500 2c1 2 3 3.500 5 4.500l2-1.500 3.500 2c0 2-2 3.500-4 3.500-6 0-11-6-11-10 0-2 1-3.500 2-4z" fill="#35c659"/></svg><i class="tk-run"></i><span class="wa-badge">7</span></div>
  <div class="tray">
    <svg class="tr-chev" viewBox="0 0 16 10"><path d="M2 9l6-7 6 7" fill="none" stroke="#111" stroke-width="1.500"/></svg>
    <svg class="tr-cloud" viewBox="0 0 24 22"><path d="M6 16a5 5 0 0 1 0-10 7 7 0 0 1 13 2 4 4 0 0 1 0 8z" fill="#9a9a9a" stroke="#111"/><circle cx="17" cy="16" r="5" fill="#fff" stroke="#1a73e8" stroke-width="1.500"/></svg>
    <svg class="tr-drive" viewBox="0 0 24 16"><path d="M5 15a4 4 0 0 1-1-8 7 7 0 0 1 13-2 5 5 0 0 1 3 10z" fill="#1a86dc"/></svg>
    <div class="tr-lang"><span>ENG</span><span>IN</span></div>
    <svg class="tr-wifi" viewBox="0 0 20 18"><path d="M1 6a13 13 0 0 1 18 0M4 9.500a9 9 0 0 1 12 0M7 13a4.500 4.500 0 0 1 6 0" fill="none" stroke="#111" stroke-width="1.400"/><circle cx="10" cy="16" r="1.400" fill="#111"/></svg>
    <svg class="tr-spk" viewBox="0 0 20 18"><path d="M1 6h3l5-4v14l-5-4H1z" fill="none" stroke="#111"/><path d="M12 6a4 4 0 0 1 0 6M14 4a7 7 0 0 1 0 10M16 2a10 10 0 0 1 0 14" fill="none" stroke="#111"/></svg>
    <svg class="tr-bat" viewBox="0 0 22 14"><rect x="1" y="1" width="17" height="12" rx="2" fill="none" stroke="#111" stroke-width="1.300"/><rect x="3" y="3" width="5" height="8" fill="#111"/><rect x="19" y="5" width="2.500" height="4" fill="#111"/></svg>
    <div class="tr-time"><span>15:05</span><span>07-06-2023</span></div>
    <span class="tr-badge">4</span>
  </div>
</footer>
</body>
</html>
```

FILE: styles.css
```css
* { box-sizing: border-box; }
html, body { margin: 0; padding: 0; }
body {
  width: 1920px; height: 1080px; overflow: hidden;
  display: flex; flex-direction: column;
  font-family: "Open Sans", "Noto Sans", sans-serif;
  background: #fff; color: #3c4043;
}
em { font-style: normal; }
.defs { position: absolute; }

/* Chrome tabs */
.tabstrip { height: 43px; background: #dee1e6; display: flex; align-items: stretch; flex: none; position: relative; }
.tab { display: flex; align-items: center; position: relative; font-family: Roboto, sans-serif; font-size: 14px; color: #3c4043; padding-bottom: 1px; }
.tab-docs { width: 309px; padding-left: 25px; }
.tab-active { width: 300px; padding-left: 15px; background: #fff; border-radius: 10px 10px 0 0; }
.tab-sep { width: 298px; padding-left: 15px; }
.tab-sep::after { content: ""; position: absolute; right: 0; top: 9px; height: 25px; width: 1px; background: #8f9398; }
.tab-ico { width: 19px; height: 22px; flex: none; margin-right: 11px; }
.tab-title { flex: 1; letter-spacing: .15px; }
.tab-x { width: 16px; margin-right: 14px; font-size: 14px; color: #3c4043; text-align: center; }
.tab-docs .tab-x { margin-right: 11px; }
.tab-active .tab-x { margin-right: 13px; }
.tab-docs .tab-ico { height: 19px; }
.new-tab { width: 15px; height: 15px; margin: 14px 0 0 22px; }
.win-ctrls { margin-left: auto; display: flex; padding: 11px 22px 0 0; gap: 41px; height: 28px; }
.win-ico { width: 16px; height: 16px; }

/* Omnibox row */
.navbar { height: 43px; flex: none; display: flex; align-items: center; background: #fff; padding: 2px 0 0 17px; }
.nav-ico { width: 20px; height: 20px; margin-right: 20px; flex: none; }
.nav-ico:nth-of-type(3) { margin-right: 17px; }
.omnibox { width: 1650px; height: 35px; border-radius: 18px; background: #f1f3f4; display: flex; align-items: center; padding: 0 13px 0 16px; flex: none; }
.lock { width: 13px; height: 16px; margin-right: 15px; flex: none; }
.url { flex: 1; font-family: Roboto, sans-serif; font-size: 17.570px; color: #5f6368; white-space: nowrap; overflow: hidden; }
.url-host { font-weight: 400; color: #202124; }
.omni-ico { width: 20px; height: 20px; margin-left: 20px; flex: none; }
.side-ico { width: 18px; height: 20px; margin-left: 19px; flex: none; }
.avatar { width: 28px; height: 34px; border-radius: 50%; margin-left: 18px; flex: none; position: relative; background: linear-gradient(#cfd9cc, #c2dbd5 70%, #63b5b8 90%, #9fb0a0); }
.avatar-top { position: absolute; left: 11px; top: 0; width: 6px; height: 6px; border-radius: 50%; background: #bda93a; }
.avatar-dot { position: absolute; left: 11px; top: 22px; width: 5px; height: 5px; border-radius: 50%; background: #55b8d8; }
.kebab { margin-left: 24px; width: 4px; display: flex; flex-direction: column; gap: 4px; }
.kebab i { width: 4px; height: 4px; border-radius: 50%; background: #5f6368; }

/* Bookmarks */
.bookmarks { height: 42px; flex: none; display: flex; align-items: center; background: #fff; font-family: Roboto, sans-serif; font-size: 14.300px; color: #3c4043; padding-bottom: 2px; }
.bm { display: flex; align-items: center; }
.bm-ico { width: 19px; height: 16px; margin-right: 10px; flex: none; }
.bm-gmail { margin-left: 19px; width: 87px; }
.bm-yt { width: 110px; }
.bm-yt .bm-ico { width: 21px; margin-right: 10px; }
.bm-maps { width: 86px; }
.bm-maps .bm-ico { width: 16px; height: 21px; margin-right: 12px; }
.bm-news { width: 88px; }
.bm-news .bm-ico { height: 19px; margin-right: 10px; }
.bm-tr .bm-ico { height: 20px; margin-right: 11px; }
.bm-g { font: 700 8px "Liberation Sans", sans-serif; fill: #fff; }
.bm-z { font: 8px "Noto Sans CJK SC", sans-serif; fill: #555; }

/* Lucid header */
.lucid-head { height: 41px; flex: none; display: flex; background: #fafbfd; border-top: 1px solid #dcdee2; border-bottom: 1px solid #e2e4e8; position: relative; font-family: Roboto, sans-serif; color: #3a414a; }
.lh-logo { width: 12px; height: 15px; margin: 14px 0 0 12px; flex: none; }
.lh-doc { margin-left: 12px; display: flex; flex-direction: column; }
.lh-title-row { display: flex; align-items: center; height: 15px; margin-top: 5px; }
.lh-title { font-size: 12.300px; font-weight: 500; width: 85px; color: #2c3138; }
.lh-star { width: 13px; height: 13px; margin-right: 12px; }
.lh-dot { width: 5px; height: 5px; border-radius: 50%; background: #1a7fc4; margin-right: 5px; }
.lh-draft { font-size: 9.500px; color: #555; width: 27px; }
.lh-caret { font-size: 7px; color: #555; }
.lh-menu { display: flex; align-items: center; height: 14px; margin-top: 1px; font-size: 10px; color: #4a4f57; margin-left: -2px; }
.lh-menu > span { margin-right: 9px; }
.lh-menu .menu-help { margin-right: 3px; }
.menu-dot { width: 5px; height: 5px; border-radius: 50%; background: #3e3fc2; margin-right: 11px; }
.menu-bino { width: 13px; height: 13px; margin-right: 16px; }
.menu-clock { width: 12px; height: 12px; margin-right: 3px; }
.lh-menu .menu-saving { text-decoration: underline; font-size: 9.500px; margin-right: 0; }
.upgrade { position: absolute; left: 888px; top: 0; width: 144px; height: 24px; background: #f96b13; color: #fff; display: flex; align-items: center; font-size: 9.500px; box-shadow: 0 2px 3px rgba(0,0,0,.35); padding: 0 0 3px 16px; }
.upgrade-link { text-decoration: underline; width: 110px; font-weight: 500; white-space: nowrap; }
.upgrade-x { font-size: 11px; }
.lh-right { margin-left: auto; display: flex; align-items: center; padding: 0 5px 0 0; height: 39px; }
.lh-ico { width: 13px; height: 13px; margin-right: 12px; }
.lh-right .lh-ico:nth-of-type(3) { margin-right: 11px; }
.share-btn { display: flex; width: 88px; height: 20px; border-radius: 2px; border: 1px solid #3e3fc2; overflow: hidden; margin-top: 1px; }
.share-main { width: 66px; background: #3e3fc2; color: #fff; font-size: 10.500px; font-weight: 500; display: flex; align-items: center; padding-left: 12px; gap: 5px; }
.share-plane { width: 14px; height: 12px; }
.share-link { flex: 1; background: #fff; display: flex; align-items: center; justify-content: center; }
.share-chain { width: 13px; height: 13px; }
.user-badge { width: 20px; height: 20px; border-radius: 50%; background: #f0625a; color: #fff; font-size: 9.500px; font-weight: 700; display: flex; align-items: center; justify-content: center; margin-left: 10px; }

/* Lucid toolbar */
.lucid-tools { height: 26px; flex: none; display: flex; align-items: center; background: #fafbfd; border-bottom: 1px solid #e2e4e8; padding: 1px 0 0 3px; font-family: Roboto, sans-serif; color: #444; }
.slot { width: 21px; height: 20px; flex: none; display: flex; align-items: center; justify-content: center; }
.slot-t { width: 23px; }
.slot-col { flex-direction: column; }
.tb { width: 13px; height: 13px; flex: none; }
.slot-col .tb { height: 12px; }
.swatch-fill, .swatch-line { width: 11px; height: 2px; margin-top: 2px; }
.swatch-fill { background: #ff8e8e; }
.swatch-line { background: #1a73e8; }
.tb-sep { width: 1px; height: 25px; background: #e2e4e8; flex: none; }
.tb-sep-a { margin: 0 1px; }
.tb-sep-b { margin: 0 2.500px 0 1px; }
.tb-sep-c { margin: 0 1px 0 0; }
.tb-sep-d { margin: 0 2px 0 1px; }
.sel { height: 15px; border: 1px solid #c3c6cb; border-radius: 2px; display: flex; align-items: center; justify-content: space-between; font-size: 9px; padding: 0 4px 0 5px; flex: none; background: #fff; color: #555; }
.sel em { font-size: 7px; color: #333; }
.sel-body { width: 84px; margin-right: 3.500px; }
.sel-font { width: 89px; margin-right: 7px; }
.size-box { width: 50px; height: 15px; border: 1px solid #c3c6cb; border-radius: 2px; display: flex; align-items: center; font-size: 8.500px; margin-right: 2px; flex: none; background: #fff; color: #555; }
.sb-btn { width: 12px; text-align: center; font-size: 11px; color: #333; }
.sb-val { flex: 1; text-align: center; border-left: 1px solid #d5d7da; border-right: 1px solid #d5d7da; height: 13px; line-height: 13px; white-space: nowrap; }
.bold-btn { width: 20px; height: 20px; margin-right: 1px; background: #e0e0fb; border-radius: 2px; text-align: center; font: 700 11px/20px "Liberation Sans", sans-serif; color: #3e3fc2; flex: none; }
.tb-i { font: italic 12px "Liberation Serif", serif; color: #555; }
.tb-u { font: 11px "Liberation Sans", sans-serif; text-decoration: underline; color: #555; }
.tb-a { font: 11px/11px "Liberation Sans", sans-serif; border-bottom: 2px solid #333; color: #333; width: 11px; text-align: center; }
.tb-t { font: 11px "Liberation Sans", sans-serif; color: #333; }
.tb-caret { font-size: 6px; margin-left: 1px; }
.line-sel, .end-sel { height: 15px; border: 1px solid #c3c6cb; border-radius: 2px; display: flex; flex: none; background: #fff; font-size: 9px; color: #666; }
.line-sel { width: 79px; margin-left: 4px; margin-right: 2px; }
.ls-left { width: 37px; border-right: 1px solid #d5d7da; display: flex; align-items: center; padding: 0 3px 0 7px; gap: 3px; }
.ls-left em { font-size: 7px; color: #333; }
.ls-line { flex: 1; height: 1px; background: #333; }
.ls-right { flex: 1; display: flex; align-items: center; justify-content: flex-end; gap: 4px; padding-right: 2px; }
.ls-dots { color: #111; font-weight: 700; font-size: 10px; }
.end-sel { width: 89px; margin: 0 2.500px 0 1.500px; }
.es-left { width: 44px; border-right: 1px solid #d5d7da; display: flex; align-items: center; justify-content: space-between; padding: 0 4px 0 5px; color: #aaa; }
.es-left em, .es-right em { font-size: 7px; color: #999; }
.es-right { flex: 1; display: flex; align-items: center; justify-content: space-between; padding: 0 3px 0 6px; }
.es-arrow { width: 18px; height: 7px; }
.tb-panel { width: 14px; height: 14px; margin-left: auto; margin-right: 6px; }

/* Workspace */
.workspace { flex: 1; min-height: 0; display: flex; }
.rail { width: 26px; flex: none; background: #fafbfd; border-right: 1px solid #dfe1e5; padding-top: 3px; display: flex; flex-direction: column; align-items: center; }
.rail-item { width: 20px; height: 20px; margin-bottom: 2.500px; border-radius: 2px; display: flex; align-items: center; justify-content: center; }
.rail-on { background: #e0e0fb; }
.rail-ico { width: 13px; height: 13px; }
.panel { width: 84px; flex: none; background: #fafbfd; border-right: 1px solid #dfe1e5; display: flex; flex-direction: column; font-family: Roboto, sans-serif; }
.panel-top { height: 25px; flex: none; border-bottom: 1px solid #dfe1e5; display: flex; align-items: center; padding: 2px 0 0 10px; }
.panel-title { font-size: 11.500px; font-weight: 700; color: #2c3f55; width: 50px; }
.pt-ico { width: 13px; height: 12px; margin-right: 5px; flex: none; }
.sec { flex: none; border-bottom: 1px solid #dfe1e5; position: relative; }
.sec-in { height: 106px; }
.sec-std { height: 98px; }
.sec-flow { height: 216px; }
.sec-shp { height: 176px; }
.sec-saved { height: 108px; }
.sec-more { height: 46px; }
.sec-import { height: 29px; border-bottom: 0; display: flex; align-items: center; padding: 1px 0 0 10px; font-size: 9.500px; color: #555; gap: 4px; letter-spacing: .3px; }
.sec-head { height: 16px; margin-top: 9px; display: flex; align-items: center; padding-left: 11px; font-size: 9.500px; color: #666; white-space: nowrap; position: relative; }
.sec-head i { font-size: 7px; font-style: normal; margin-right: 5px; width: 5px; }
.sec-head b { position: absolute; left: 64px; font-weight: 400; font-size: 12px; color: #555; }
.sec-head-saved { padding-left: 9px; }
.sec-head-saved i { margin-right: 2px; }
.sec-flow .sec-head { margin-top: 10px; }
.sec-flow .sh-grid { margin-top: 7px; }
.swatches { margin: 9px 0 0 10px; display: grid; grid-template-columns: repeat(3, 16px); grid-auto-rows: 16px; column-gap: 8px; row-gap: 3px; }
.sw { display: block; border: 1px solid #88a; }
.sw-r1 { background: #ff8e8e; border-color: #9a9a9a; }
.sw-r2 { background: #ff8e8e; border-color: #7e9be8; }
.sw-t1 { background: #b8f5ec; border-color: #7f9f9f; }
.sw-t2 { background: #b8f5ec; border-color: #7f9f9f; }
.sw-t3 { background: #b8f5ec; border-color: #6ab0f0; }
.sw-y { background: #fff6a8; border-color: #6ab0f0; }
.key-link { margin: 4px 0 0 11px; font-size: 9.500px; line-height: 11px; color: #1a73e8; }
.sh-grid { margin: 8px 0 0 5px; display: grid; grid-template-columns: repeat(3, 24px); grid-auto-rows: 19.500px; justify-items: center; align-items: center; }
.sh { width: 17px; height: 17px; fill: none; stroke: #1c1c1c; stroke-width: 1.200; overflow: visible; }
.sh-fill { fill: #3a414a; stroke: none; }
.sh-white { fill: #fff; stroke-width: .7; }
.std-t { font: 19px/19px "Liberation Serif", serif; color: #3a414a; }
.std-note { width: 16px; height: 16px; background: #ffeeb0; display: block; }
.std-bolt { width: 17px; height: 18px; background: #9ad8cc; display: flex; align-items: center; justify-content: center; }
.std-play { width: 17px; height: 17px; background: #dcdcfb; display: flex; align-items: center; justify-content: center; }
.sh-in { width: 13px; height: 14px; }
.drop-box { margin: 7px 0 0 8px; width: 69px; height: 70px; border: 1px dashed #a8abb2; display: flex; flex-direction: column; align-items: center; padding-top: 4px; }
.drop-art { width: 58px; height: 32px; flex: none; }
.drop-t { font: 700 14px "Liberation Serif", serif; fill: #d5d7db; }
.drop-text { font-size: 9.800px; line-height: 11px; font-style: italic; color: #888; text-align: center; margin-top: 3px; white-space: nowrap; }
.more-art { height: 16px; display: flex; align-items: flex-end; justify-content: center; padding-top: 8px; gap: 1px; overflow: hidden; }
.ma { width: 13px; height: 9px; display: block; border-radius: 2px 2px 0 0; }
.ma-b { background: #2f7ee0; }
.ma-o { background: #e9742b; }
.ma-g { background: #cfe4f0; }
.ma-p { background: #e0306f; }
.more-btn { height: 20px; background: #3e3fc2; color: #fff; border-radius: 2px; font-size: 9.500px; font-weight: 700; text-align: center; line-height: 20px; }
.imp-ico { width: 13px; height: 13px; flex: none; }

/* Canvas */
.stage { flex: 1; min-width: 0; background: #f2f3f5; position: relative; overflow: hidden; }
.page {
  margin-left: 81px; width: 1342px; height: 683px; position: relative; overflow: hidden;
  background-color: #fff;
  background-image:
    linear-gradient(to right, #e0e0e0 1px, transparent 1px),
    linear-gradient(to bottom, #e0e0e0 1px, transparent 1px),
    linear-gradient(to right, #f0f0f0 1px, transparent 1px),
    linear-gradient(to bottom, #f0f0f0 1px, transparent 1px);
  background-size: 146px 146px, 146px 146px, 29.200px 29.200px, 29.200px 29.200px;
  background-position: 75.700px 0, 0 10.300px, 17.300px 0, 0 10.300px;
  box-shadow: 0 0 4px rgba(0,0,0,.3);
}
.wires, .handles { position: absolute; left: 0; top: 0; width: 1342px; height: 683px; }
.dash { fill: none; stroke: #dddddd; stroke-width: 3; stroke-dasharray: 10 10; }
.wire { fill: none; stroke: #7fb4f0; stroke-width: 1; }
.wire-strong { fill: none; stroke: #4a90e2; stroke-width: 1; }
.wire-light { fill: none; stroke: #a9cdf5; stroke-width: 1; }
.arrow { fill: #1a73e8; }
.hd { fill: #fff; stroke: #45b0ec; stroke-width: 1; }
.rot { fill: none; stroke: #c5d8f0; stroke-width: 1; }
.node { position: absolute; border: 1px solid #66a8ee; border-radius: 1px; font-family: "Liberation Sans", sans-serif; color: #4a535a; text-align: center; overflow: hidden; }
.red { background: #ff8e8e; }
.teal { background: #b8f5ec; font-size: 8.900px; line-height: 10.700px; white-space: nowrap; }
.yellow { background: #fff6a8; font-weight: 700; font-size: 9px; display: flex; align-items: center; justify-content: center; white-space: nowrap; color: #45494d; }
.n-title { left: 316px; top: 56px; width: 752px; height: 34px; font-size: 18.600px; font-weight: 700; line-height: 27px; color: #3d444c; white-space: nowrap; }
.n-pay-h { left: 330px; top: 154px; width: 100px; height: 34px; }
.n-pay-b { left: 316px; top: 187px; width: 120px; height: 101px; padding-top: 3px; }
.n-res-h { left: 622px; top: 172px; width: 130px; height: 34px; }
.n-res-b { left: 622px; top: 205px; width: 130px; height: 100px; padding-top: 2px; }
.n-boo-h { left: 958px; top: 159px; width: 102px; height: 30px; }
.n-boo-b { left: 958px; top: 188px; width: 102px; height: 92px; padding-top: 3px; }
.n-cus-h { left: 944px; top: 358px; width: 130px; height: 26px; }
.n-cus-b { left: 944px; top: 383px; width: 130px; height: 69px; padding-top: 3px; }
.n-rat-h { left: 358px; top: 349px; width: 119px; height: 35px; }
.n-rat-b { left: 352px; top: 383px; width: 130px; height: 102px; padding-top: 3px; }
.n-men-h { left: 670px; top: 401px; width: 80px; height: 34px; }
.n-men-b { left: 652px; top: 443px; width: 107px; height: 68px; padding-top: 3px; }
.n-foot { left: 440px; top: 544px; width: 505px; height: 60px; padding-top: 7px; line-height: 13.300px; white-space: nowrap; }
.foot-l1 { font-size: 10.500px; }
.foot-l2 { font-size: 10.500px; }
.foot-big { font-size: 12px; }

.hscroll { position: absolute; left: 629px; top: 799px; width: 658px; height: 4px; border-radius: 2px; background: #c2c2c2; }
.vscroll { position: absolute; right: 2px; top: 403px; width: 4px; height: 212px; border-radius: 2px; background: #c2c2c2; }

/* Page bar */
.pagebar { height: 21px; flex: none; display: flex; align-items: center; background: #fafbfd; border-top: 1px solid #dfe1e5; border-bottom: 1px solid #b8b6a8; font-family: Roboto, sans-serif; color: #555; }
.pb-ico { width: 13px; height: 13px; flex: none; }
.pb-list { margin-left: 7px; }
.pb-grid { margin-left: 12px; }
.page-pill { margin-left: 11px; width: 53px; height: 17px; background: #6b7280; border-radius: 0 0 3px 3px; color: #fff; font-size: 9.500px; display: flex; align-items: center; justify-content: space-between; padding: 0 6px 0 5px; margin-top: -2px; flex: none; }
.page-pill em { font-size: 7px; }
.pb-add { margin-left: 8px; }
.status { margin-left: auto; display: flex; align-items: center; height: 100%; }
.st-sel { width: 124px; display: flex; align-items: center; border-left: 1px solid #e2e4e8; padding-left: 6px; font-size: 9px; height: 100%; white-space: nowrap; }
.st-sel span { margin-left: 3px; width: 72px; }
.st-badge { width: 10px; height: 10px; border-radius: 50%; background: #dcdcfb; color: #3e3fc2; font-size: 7px; font-style: normal; text-align: center; line-height: 10px; margin-right: 4px; flex: none; }
.st-sel em { font-size: 7px; color: #333; }
.st-slot { width: 25px; height: 100%; display: flex; align-items: center; justify-content: center; }
.st-bord { border-left: 1px solid #e2e4e8; }
.st-pm { font-size: 15px; color: #333; border-left: 1px solid #e2e4e8; width: 23px; }
.st-zoom { width: 36px; font-size: 9px; text-align: center; color: #555; }
.st-pm:nth-child(6) { border-left: 0; }
.st-full { border-left: 1px solid #e2e4e8; width: 27px; }

/* Taskbar */
.taskbar { height: 59px; flex: none; display: flex; align-items: center; font-family: Roboto, sans-serif; color: #1a1a1a; background: linear-gradient(to right, #eedfb9 0%, #efe3b5 10%, #d4e8f1 17.500%, #d6e8ef 19%, #efe6b9 23.500%, #eedcc9 30%, #eedccc 50%, #e8dccb 55%, #d6e7ef 57.500%, #d3e6ef 65%, #efdccb 72%, #eddccb 95%, #e2e6d0 100%); }
.weather { width: 489px; flex: none; display: flex; align-items: center; padding-left: 25px; }
.wx-ico { width: 28px; height: 28px; flex: none; margin-right: 12px; }
.wx-text { display: flex; flex-direction: column; font-size: 14.500px; line-height: 20px; }
.wx-sub { color: #444; }
.tk { width: 55px; height: 59px; flex: none; display: flex; align-items: center; justify-content: center; position: relative; }
.tk:first-of-type { width: 54px; }
.win-logo { width: 29px; height: 29px; }
.tk-ico { width: 29px; height: 29px; }
.tk-first { margin-left: 6px; }
.search { width: 271px; height: 38px; margin-left: 5px; border-radius: 19px; background: #faf4ea; border: 1px solid #f3ead9; display: flex; align-items: center; padding-left: 12px; flex: none; position: relative; }
.search-mag { width: 19px; height: 19px; margin-right: 13px; }
.search-text { font-family: "Open Sans", sans-serif; font-size: 16px; color: #444; }
.search-art { position: absolute; left: 209px; top: 0; width: 56px; height: 36px; }
.help-q { font: 700 24px "Liberation Sans", sans-serif; fill: #fff; text-anchor: middle; }
.help-dot { position: absolute; left: 33px; top: 8px; width: 18px; height: 20px; border-radius: 50%; background: #ffc107; }
.tk-chrome::before { content: ""; position: absolute; left: 4px; top: 5px; width: 46px; height: 49px; border-radius: 4px; background: #f7efe6; box-shadow: 0 0 1px rgba(0,0,0,.25); }
.chrome-ball { position: relative; width: 30px; height: 30px; border-radius: 50%; background: conic-gradient(#f2c21a 0 120deg, #34a853 120deg 240deg, #ea4335 240deg 360deg); display: flex; align-items: center; justify-content: center; }
.chrome-ball i { width: 14px; height: 14px; border-radius: 50%; background: #4285f4; border: 2px solid #fff; }
.chrome-user { position: absolute; left: 27px; top: 8px; width: 20px; height: 24px; border-radius: 50%; background: #b9c1b8; }
.tk-active { position: absolute; left: 18px; bottom: 2px; width: 19px; height: 4px; border-radius: 2px; background: #0a78d4; }
.tk-run { position: absolute; left: 24px; bottom: 2px; width: 7px; height: 4px; border-radius: 2px; background: #777; }
.wa-badge { position: absolute; left: 30px; top: 7px; width: 20px; height: 20px; border-radius: 50%; background: #0b6cc7; color: #fff; font-size: 12px; text-align: center; line-height: 20px; }
.tray { margin-left: 77px; flex: 1; display: flex; align-items: center; }
.tr-chev { width: 14px; height: 9px; margin: 0 8px; flex: none; }
.tr-cloud { width: 24px; height: 22px; margin-left: 13.500px; flex: none; }
.tr-drive { width: 22px; height: 15px; margin-left: 16.500px; flex: none; }
.tr-lang { width: 56px; margin-left: 9px; display: flex; flex-direction: column; align-items: center; font-size: 14px; line-height: 21px; flex: none; }
.tr-wifi { width: 20px; height: 18px; margin-left: 9px; flex: none; }
.tr-spk { width: 20px; height: 18px; margin-left: 9px; flex: none; }
.tr-bat { width: 21px; height: 14px; margin-left: 10px; flex: none; }
.tr-time { width: 89.500px; display: flex; flex-direction: column; align-items: flex-end; font-size: 14px; line-height: 21px; flex: none; }
.tr-badge { margin-left: 17.500px; width: 20px; height: 20px; border-radius: 50%; background: #0b5cb8; color: #fff; font-size: 12px; text-align: center; line-height: 20px; flex: none; }
```
